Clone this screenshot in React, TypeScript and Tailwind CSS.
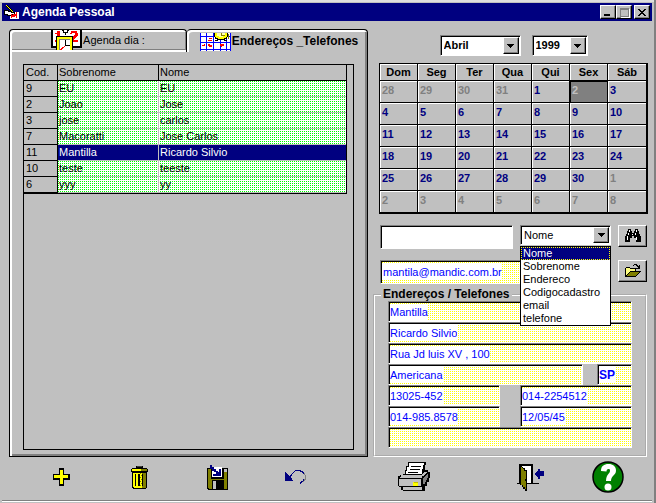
import { useState } from "react";
import type { ReactNode } from "react";

const raised =
  "bg-[#c0c0c0] border border-t-white border-l-white border-r-black border-b-black shadow-[inset_-1px_-1px_#808080]";
const sunken =
  "border border-t-[#808080] border-l-[#808080] border-r-white border-b-white shadow-[inset_1px_1px_#000]";
// dot patterns are fixed to the window so neighbouring boxes line up
const greenDots =
  "bg-[conic-gradient(#00ff00_25%,#ffffff_0)] bg-[length:2px_2px] bg-[position:1px_1px] bg-fixed";
const yellowDots =
  "bg-[conic-gradient(#ffff00_25%,#ffffff_0)] bg-[length:2px_2px] bg-[position:1px_1px] bg-fixed";
const emailDots =
  "bg-[conic-gradient(#ffff00_25%,#ffffff_0)] bg-[length:2px_2px] bg-[position:1px_0px] bg-fixed";

const contacts = [
  { id: 9, last: "EU", first: "EU" },
  { id: 2, last: "Joao", first: "Jose" },
  { id: 3, last: "jose", first: "carlos" },
  { id: 7, last: "Macoratti", first: "Jose Carlos" },
  { id: 11, last: "Mantilla", first: "Ricardo Silvio" },
  { id: 10, last: "teste", first: "teeste" },
  { id: 6, last: "yyy", first: "yy" },
];

const weekDays = ["Dom", "Seg", "Ter", "Qua", "Qui", "Sex", "Sáb"];

const weeks = [
  [28, 29, 30, 31, 1, 2, 3],
  [4, 5, 6, 7, 8, 9, 10],
  [11, 12, 13, 14, 15, 16, 17],
  [18, 19, 20, 21, 22, 23, 24],
  [25, 26, 27, 28, 29, 30, 1],
  [2, 3, 4, 5, 6, 7, 8],
];

const searchFields = [
  "Nome",
  "Sobrenome",
  "Endereco",
  "Codigocadastro",
  "email",
  "telefone",
];

function WriterIcon() {
  return (
    <svg width="15" height="15" viewBox="0 0 15 15" shapeRendering="crispEdges">
      <path d="M5 7h10v7H6z" fill="#fff" />
      <path d="M0 5h4v1h3v1h3v2H8v1H3V9H0z" fill="#fff" stroke="#000" />
      <path d="M2 1l7 7M3 0l6 6" stroke="#000" />
      <path d="M2 0l7 7" stroke="#ff0" />
      <path d="M7 13V9l2 3 1-3v3l2-3v4" fill="none" stroke="#f00" />
    </svg>
  );
}

function DayIcon() {
  return (
    <svg width="31" height="20" viewBox="0 0 31 20" shapeRendering="crispEdges">
      <path d="M0 0h31v18H0z" fill="#000" />
      <path d="M2 0h27v16H2z" fill="#fff" />
      <path d="M4 3h2V1h3v9h2v2H4v-2h2V4H4z" fill="#f00" />
      <path d="M19 3h1V1h6v2h1v3h-1v1h-1v1h-1v1h-1v1h4v2h-8V9h1V8h1V7h1V6h1V5h1V3h-3v1h-2z" fill="#f00" />
      <path d="M11 0h2v2h3V0h2v1h-1v2h-2v2h-1V3h-2V1h-1z" fill="#000" />
      <path d="M5 6h17v14H5z" fill="#000" />
      <path d="M6 7h15v13H6z" fill="#ff0" />
      <path d="M8 9h11v11H8z" fill="#808080" />
      <path d="M9 10h10v10H9z" fill="#fff" />
      <path d="M14 10h1v5h4v1h-5z" fill="#000" />
      <path d="M13 16h1v1h-1v1h-1v1h-1v1h-2v-1h1v-1h1v-1h2z" fill="#f00" />
    </svg>
  );
}

function PlannerIcon() {
  return (
    <svg width="31" height="18" viewBox="0 0 31 18" shapeRendering="crispEdges">
      <path d="M0 0h31v18H0z" fill="#fff" />
      <path
        d="M0 0h1v18H0zM6 0h1v18H6zM13 0h1v18h-1zM20 5h1v13h-1zM26 5h1v13h-1zM30 0h1v18h-1zM0 3h31v1H0zM0 9h31v1H0zM0 16h31v1H0z"
        fill="#00f"
      />
      <path d="M9 5h3v1H9zM8 7h4v1H8zM2 12h2v-1h1v2H2zM8 11h2v1h2v2H9v-1H8zM20 11h4v2h-2v1h-1v-1h-1z" fill="#f00" />
      <path d="M14 0h14v4h-1v2h-2v1h2v1h-3V7h-6v1h-3V7h2V6h-2V4h-1z" fill="#000" />
      <path d="M15 0h12v4h-1v1h-2v1h-6V5h-2V4h-1z" fill="#ff0" />
      <path d="M17 0h8v3h-2v1h-4V3h-2z" fill="#ffffb0" />
      <path d="M21 0h1v2h3v1h-4zM28 1h1v5h-1z" fill="#808000" />
    </svg>
  );
}

function BinocularsIcon() {
  return (
    <svg width="16" height="14" viewBox="0 0 16 14" shapeRendering="crispEdges">
      <path
        d="M3 0h3v2h1v2h2V2h1V0h3v2h1v3h1v2h1v6h-5V9H9V7H7v2H5v4H0V7h1V5h1V2h1z"
        fill="#000"
      />
      <path d="M4 1h1v2H4zM3 4h1v2H3zM2 7h1v4H2zM11 1h1v2h-1zM10 4h1v2h-1zM11 8h1v3h-1zM7 5h1v1H7z" fill="#fff" />
    </svg>
  );
}

function FolderIcon() {
  return (
    <svg width="16" height="14" viewBox="0 0 16 14" shapeRendering="crispEdges">
      <path d="M0 4h1V3h4v1h6v3h5v1h-1v1h-1v1h-1v1h-1v1h-1v1H0z" fill="#000" />
      <path d="M1 4h4v1h5v2H5v1H4v1H3v1H2v1H1z" fill="#ffff80" />
      <path d="M5 8h9v1h-1v1h-1v1h-1v1H2v-1h1v-1h1V9h1z" fill="#808000" />
      <path d="M8 1h1V0h3v1h1v1h1V1h1v4h-4V4h2V3h-1V2h-1V1H9v1H8z" fill="#000" />
    </svg>
  );
}

function PlusIcon() {
  return (
    <svg width="17" height="18" viewBox="0 0 17 18" shapeRendering="crispEdges">
      <path d="M6 0h5v6h6v6h-6v6H6v-6H0V6h6z" fill="#000" />
      <path d="M7 2h3v5h5v3h-5v6H7v-6H1V7h6z" fill="#ff0" />
    </svg>
  );
}

function TrashIcon() {
  return (
    <svg width="17" height="23" viewBox="0 0 17 23" shapeRendering="crispEdges">
      <path d="M5 0h7v2h4v1h1v3h-1v16h-1v1H2v-1H1V6H0V3h1V2h4z" fill="#000" />
      <path d="M6 0h5v1H6z" fill="#404040" />
      <path d="M1 3h15v2H1zM2 7h12v15H3v-1H2z" fill="#ff0" />
      <path d="M11 7h4v15h-4zM10 3h6v2h-6z" fill="#808000" />
      <path d="M4 8h1v12H4zM7 8h2v12H7zM11 8h1v12h-1z" fill="#000" />
      <path d="M9 7h1v1H9zM10 9h1v1h-1zM9 11h1v1H9zM10 13h1v1h-1zM9 15h1v1H9zM10 17h1v1h-1zM9 19h1v1H9z" fill="#808000" />
    </svg>
  );
}

function SaveIcon() {
  return (
    <svg width="21" height="25" viewBox="0 0 21 25" shapeRendering="crispEdges">
      <path d="M0 3h21v22H1v-1H0z" fill="#000" />
      <path d="M1 4h19v20H2v-1H1z" fill="#808000" />
      <path d="M4 3h13v11H4z" fill="#000" />
      <path d="M3 2h12v10H5V4H3z" fill="#fff" />
      <path d="M17 4h3v3h-3z" fill="#c0c0c0" />
      <path d="M5 15h12v9H5z" fill="#000" />
      <path d="M6 16h3v8H6z" fill="#c0c0c0" />
      <path d="M3 0h2v2h2v2h2v2h2v1h1V4h2v7H6V9h3V7H7V6H5V4H3z" fill="#000080" />
    </svg>
  );
}

function UndoIcon() {
  return (
    <svg width="21" height="14" viewBox="0 0 21 14" shapeRendering="crispEdges">
      <path d="M16 1h2v1h1v1h1v2h1v5h-1v1h-1v1h-2v-1h1v-1h1V9h1V5h-1V3h-1V2h-2z" fill="#808080" />
      <path
        d="M5 7V5h1V4h1V3h1V2h1V1h1V0h6v1h2v1h1v2h-1V3h-1V2h-2V1h-5v1H9v1H8v1H7v2H6v2zM18 9h1v2h-1v1h-1v1h-1v1h-1v-2h1v-1h2z"
        fill="#000080"
      />
      <path d="M0 2h1v1h1v1h1v1h1v1h1v1h1v1h1v2h1v1H0z" fill="#000080" />
    </svg>
  );
}

function PrinterIcon() {
  return (
    <svg width="32" height="30" viewBox="0 0 32 30" shapeRendering="crispEdges">
      <path d="M10 0h18v3h-1v5h3v2h2v6h-1v4h-2v4h-2v5H5v-1H3v-3H1v-1H0V14h2v-1h3v-1h2V8h1V4h2z" fill="#000" />
      <path d="M11 1h15v2h-1v4h-1v5H8V9h1V5h2z" fill="#fff" />
      <path d="M13 4h10v1H13zM12 7h10v1H12zM10 10h10v1H10z" fill="#000" />
      <path d="M3 13h21v2H3zM24 12h1v-1h1v-1h3v1h-1v1h-1v1h-1v1h-2z" fill="#c0c0c0" />
      <path d="M1 17h22v7H1zM2 15h22v1H2zM5 25h19v3H5z" fill="#c0c0c0" />
      <path d="M25 16h1v-1h1v-1h1v-1h1v-1h1v4h-1v2h-1v2h-1v2h-2z" fill="#808080" />
      <path d="M15 20h5v4h-5z" fill="#ff0" />
      <path d="M16 20h4v1h-4z" fill="#c0c000" />
    </svg>
  );
}

function ExitIcon() {
  return (
    <svg width="27" height="27" viewBox="0 0 27 27" shapeRendering="crispEdges">
      <path d="M2 0h14v19h6v1H0v-1h2z" fill="#000" />
      <path d="M5 2h9v17H5z" fill="#fff" />
      <path d="M3 1h1v1h1v1h1v1h2v2h2v21H8v-2H6v-2H5v-2H3z" fill="#000" />
      <path d="M4 3h1v1h1v1h1v2h2v18H8v-2H6v-2H4z" fill="#808000" />
      <path d="M8 15h1v2H8z" fill="#000" />
      <path d="M18 9h1V8h1V7h1V5h2v2h4v5h-4v3h-2v-2h-1v-1h-1v-1h-1z" fill="#000080" />
    </svg>
  );
}

function HelpIcon() {
  return (
    <svg width="32" height="32" viewBox="0 0 32 32">
      <circle cx="16" cy="16" r="15" fill="#008000" stroke="#000" strokeWidth="1.5" />
      <path
        d="M9 10c0-5 3-7 7.500-7s7.500 2.500 7.500 6.500c0 5-5 5-5 10.500h-5c0-7 4-7 4-10.500 0-2-3.500-2-3.500 1z"
        fill="#fff"
      />
      <circle cx="16" cy="26" r="3.500" fill="#fff" />
    </svg>
  );
}

function DropArrow() {
  return (
    <span
      className={`pointer-events-none absolute top-[2px] right-[2px] bottom-[2px] flex w-4 items-center justify-center ${raised}`}
    >
      <svg width="7" height="4" viewBox="0 0 7 4" shapeRendering="crispEdges">
        <path d="M0 0h7v1H6v1H5v1H4v1H3V3H2V2H1V1H0z" fill="#000" />
      </svg>
    </span>
  );
}

function Field({
  label,
  value,
  className = "",
}: {
  label: string;
  value: string;
  className?: string;
}) {
  return (
    <label className={`flex h-[21px] items-center pl-[1px] ${sunken} ${yellowDots} ${className}`}>
      <input
        aria-label={label}
        defaultValue={value}
        className={`field-sizing-content h-4 max-w-full text-[#0000ff] outline-none ${value ? "bg-white" : ""}`}
      />
    </label>
  );
}

function ToolButton({ label, children }: { label: string; children: ReactNode }) {
  return (
    <button
      type="button"
      aria-label={label}
      title={label}
      className="flex w-8 items-center justify-center"
    >
      {children}
    </button>
  );
}

function TitleBar() {
  return (
    <header className="mx-[2px] flex h-[18px] items-center bg-[#000080] pr-[2px] pl-[2px] text-white">
      <WriterIcon />
      <h1 className="ml-[3px] grow text-[12px] font-bold">Agenda Pessoal</h1>
      <button type="button" aria-label="Minimizar" className={`flex h-[14px] w-4 items-end pb-[2px] pl-[3px] ${raised}`}>
        <span className="h-[2px] w-[6px] bg-black" />
      </button>
      <button type="button" aria-label="Maximizar" disabled className={`flex h-[14px] w-4 items-center justify-center ${raised}`}>
        <span className="h-[9px] w-[9px] border border-t-2 border-[#808080] shadow-[1px_1px_#fff]" />
      </button>
      <button type="button" aria-label="Fechar" className={`ml-[2px] flex h-[14px] w-4 items-center justify-center ${raised}`}>
        <svg width="8" height="7" viewBox="0 0 8 7" shapeRendering="crispEdges">
          <path
            d="M0 0h2v1h1v1h2V1h1V0h2v1H7v1H6v1H5v1h1v1h1v1h1v1H6V6H5V5H3v1H2v1H0V6h1V5h1V4h1V3H2V2H1V1H0z"
            fill="#000"
          />
        </svg>
      </button>
    </header>
  );
}

function ContactsPanel() {
  const [selected, setSelected] = useState(11);

  return (
    <section className="flex flex-col">
      <div role="tablist" className="flex h-[23px]">
        <button
          type="button"
          role="tab"
          aria-selected={false}
          className="flex flex-1 items-start justify-center gap-[1px] overflow-hidden rounded-t-[4px] border border-b-0 border-black shadow-[inset_0_-2px_#fff,inset_2px_2px_#fff,inset_-1px_-3px_#808080]"
        >
          <DayIcon />
          <span className="pt-[4px]">Agenda dia :</span>
        </button>
        <button
          type="button"
          role="tab"
          aria-selected={true}
          className="flex flex-1 items-start justify-center gap-[1px] overflow-hidden rounded-t-[4px] border-t border-r border-black pt-[3px] pl-[4px] text-[12px] font-bold shadow-[inset_2px_2px_#fff,inset_-2px_0_#808080]"
        >
          <PlannerIcon />
          <span className="pt-[2px]">Endereços _Telefones</span>
        </button>
      </div>
      <div className="flex grow flex-col border border-t-0 border-black px-[13px] pt-3 pb-[6px] shadow-[inset_2px_0_#fff,inset_-2px_-2px_#808080]">
        <div className="grow border border-black pr-[6px]">
          <table className="w-full table-fixed border-separate border-spacing-0 border-r border-b border-black text-left">
            <thead>
              <tr className="h-4">
                <th className="w-[34px] border-r border-b border-black p-0 pl-[2px] font-normal">Cod.</th>
                <th className="w-[101px] border-r border-b border-black p-0 pl-[1px] font-normal">Sobrenome</th>
                <th className="border-b border-black p-0 pl-[1px] font-normal">Nome</th>
              </tr>
            </thead>
            <tbody>
              {contacts.map((c) => {
                const fill = c.id === selected ? "bg-[#000080] text-white" : greenDots;
                return (
                  <tr key={c.id} className="h-4" onClick={() => setSelected(c.id)}>
                    <td className="border-r border-b border-black p-0 pl-[2px]">{c.id}</td>
                    <td className={`border-r border-b border-[#c0c0c0] p-0 pl-[1px] ${fill}`}>{c.last}</td>
                    <td className={`border-b border-[#c0c0c0] p-0 pl-[1px] ${fill}`}>{c.first}</td>
                  </tr>
                );
              })}
            </tbody>
          </table>
        </div>
      </div>
    </section>
  );
}

function Calendar() {
  return (
    <table className="w-full table-fixed border-separate border-spacing-0 border-t border-r-2 border-b-2 border-l border-black font-bold">
      <thead>
        <tr className="h-[17px]">
          {weekDays.map((d) => (
            <th key={d} className="border-r border-b border-black p-0 shadow-[inset_1px_1px_#fff] last:border-r-0">
              {d}
            </th>
          ))}
        </tr>
      </thead>
      <tbody>
        {weeks.map((week, w) => (
          <tr key={w} className="h-[22px] last:h-[21px]">
            {week.map((day, d) => {
              const outside = (w === 0 && day > 20) || (w > 3 && day < 10);
              const today = w === 0 && d === 5;
              let look = "text-[#000080] shadow-[inset_1px_1px_#fff]";
              if (outside) look = "text-[#808080] shadow-[inset_1px_1px_#fff]";
              if (today) look = "bg-[#808080] text-[#c0c0c0] shadow-[inset_1px_1px_#000]";
              return (
                <td
                  key={d}
                  className={`border-black p-0 pb-[2px] pl-[2px] ${d < 6 ? "border-r" : ""} ${w < 5 ? "border-b" : ""} ${look}`}
                >
                  {day}
                </td>
              );
            })}
          </tr>
        ))}
      </tbody>
    </table>
  );
}

function SearchBox() {
  const [field, setField] = useState("Nome");

  return (
    <div className="mt-[11px] flex flex-col gap-[11px] pr-[1px] pl-[7px]">
      <div className="flex h-6 items-start gap-[7px]">
        <input aria-label="Procurar" className={`h-6 min-w-0 grow bg-white px-1 outline-none ${sunken}`} />
        <div className="relative w-[91px] shrink-0">
          <select
            aria-label="Campo"
            value={field}
            onChange={(e) => setField(e.target.value)}
            className={`h-5 w-full appearance-none bg-white pl-[3px] outline-none ${sunken}`}
          >
            {searchFields.map((f) => (
              <option key={f}>{f}</option>
            ))}
          </select>
          <DropArrow />
          <ul role="listbox" aria-label="Campos" className="absolute top-[21px] left-0 z-10 w-full border border-black bg-white">
            {searchFields.map((f) => (
              <li
                key={f}
                role="option"
                aria-selected={f === field}
                onClick={() => setField(f)}
                className={`h-[13px] pl-[2px] leading-[13px] ${
                  f === field ? "bg-[#000080] text-white outline-1 -outline-offset-1 outline-dotted outline-[#ffff00]" : ""
                }`}
              >
                {f}
              </li>
            ))}
          </ul>
        </div>
        <button type="button" aria-label="Localizar" className={`flex h-[22px] w-[29px] shrink-0 items-center justify-center ${raised}`}>
          <BinocularsIcon />
        </button>
      </div>
      <div className="flex h-6 items-start gap-[7px]">
        <label className={`flex h-6 min-w-0 grow items-center pl-[1px] ${sunken} ${emailDots}`}>
          <input
            aria-label="E-mail"
            type="email"
            defaultValue="mantila@mandic.com.br"
            className="field-sizing-content h-4 bg-white pl-[1px] text-[#0000ff] outline-none"
          />
        </label>
        <button type="button" aria-label="Abrir" className={`flex h-[22px] w-[29px] shrink-0 items-center justify-center ${raised}`}>
          <FolderIcon />
        </button>
      </div>
    </div>
  );
}

function AddressForm() {
  return (
    <fieldset className="mt-[4px] mr-[1px] min-w-0 grow border-2 border-white px-[13px] pb-[5px] [border-style:groove]">
      <legend className="-ml-[7px] px-[2px] text-[12px] leading-[13px] font-bold">Endereços / Telefones</legend>
      <Field label="Sobrenome" value="Mantilla" />
      <Field label="Nome" value="Ricardo Silvio" />
      <Field label="Endereço" value="Rua Jd luis XV , 100" />
      <div className="flex">
        <Field label="Cidade" value="Americana" className="grow" />
        <span className="w-[14px]" />
        <Field label="Estado" value="SP" className="w-[35px] text-[12px] font-bold" />
      </div>
      <div className="grid grid-cols-2 gap-x-5">
        <Field label="CEP" value="13025-452" />
        <Field label="Telefone" value="014-2254512" />
        <Field label="Celular" value="014-985.8578" />
        <Field label="Nascimento" value="12/05/45" />
      </div>
      <Field label="Observação" value="" />
    </fieldset>
  );
}

export default function App() {
  return (
    <div className="flex min-h-screen flex-col border-r-2 border-[#808080] bg-[#c0c0c0] pt-[3px] font-['Liberation_Sans',sans-serif] text-[11px] leading-[13px] text-black shadow-[inset_0_2px_#dfdfdf]">
      <TitleBar />
      <main className="grid grow grid-cols-[minmax(0,359fr)_minmax(0,275fr)] gap-x-[5px] pt-2 pr-[6px] pl-[9px]">
        <ContactsPanel />
        <section className="flex flex-col">
          <div className="pt-[6px] pl-[6px]">
            <div className="mb-[7px] flex justify-center gap-[11px] font-bold">
              <div className="relative w-[81px]">
                <select aria-label="Mês" className={`h-[21px] w-full appearance-none bg-white pl-[3px] outline-none ${sunken}`}>
                  <option>Abril</option>
                </select>
                <DropArrow />
              </div>
              <div className="relative w-14">
                <select aria-label="Ano" className={`h-[21px] w-full appearance-none bg-white pl-[3px] outline-none ${sunken}`}>
                  <option>1999</option>
                </select>
                <DropArrow />
              </div>
            </div>
            <Calendar />
          </div>
          <SearchBox />
          <AddressForm />
        </section>
      </main>
      <nav
        aria-label="Ações"
        className="mx-[2px] mb-[1px] flex h-[45px] items-center justify-between border-b border-white pt-[1px] pr-[28px] pb-[5px] pl-[43px] shadow-[inset_0_-1px_#808080]"
      >
        <div className="flex gap-[46px]">
          <ToolButton label="Incluir"><PlusIcon /></ToolButton>
          <ToolButton label="Excluir"><TrashIcon /></ToolButton>
          <ToolButton label="Salvar"><SaveIcon /></ToolButton>
          <ToolButton label="Desfazer"><UndoIcon /></ToolButton>
        </div>
        <div className="flex items-center gap-[84px]">
          <ToolButton label="Imprimir"><PrinterIcon /></ToolButton>
          <div className="flex items-center gap-[46px]">
            <ToolButton label="Sair"><ExitIcon /></ToolButton>
            <ToolButton label="Ajuda"><HelpIcon /></ToolButton>
          </div>
        </div>
      </nav>
    </div>
  );
}
